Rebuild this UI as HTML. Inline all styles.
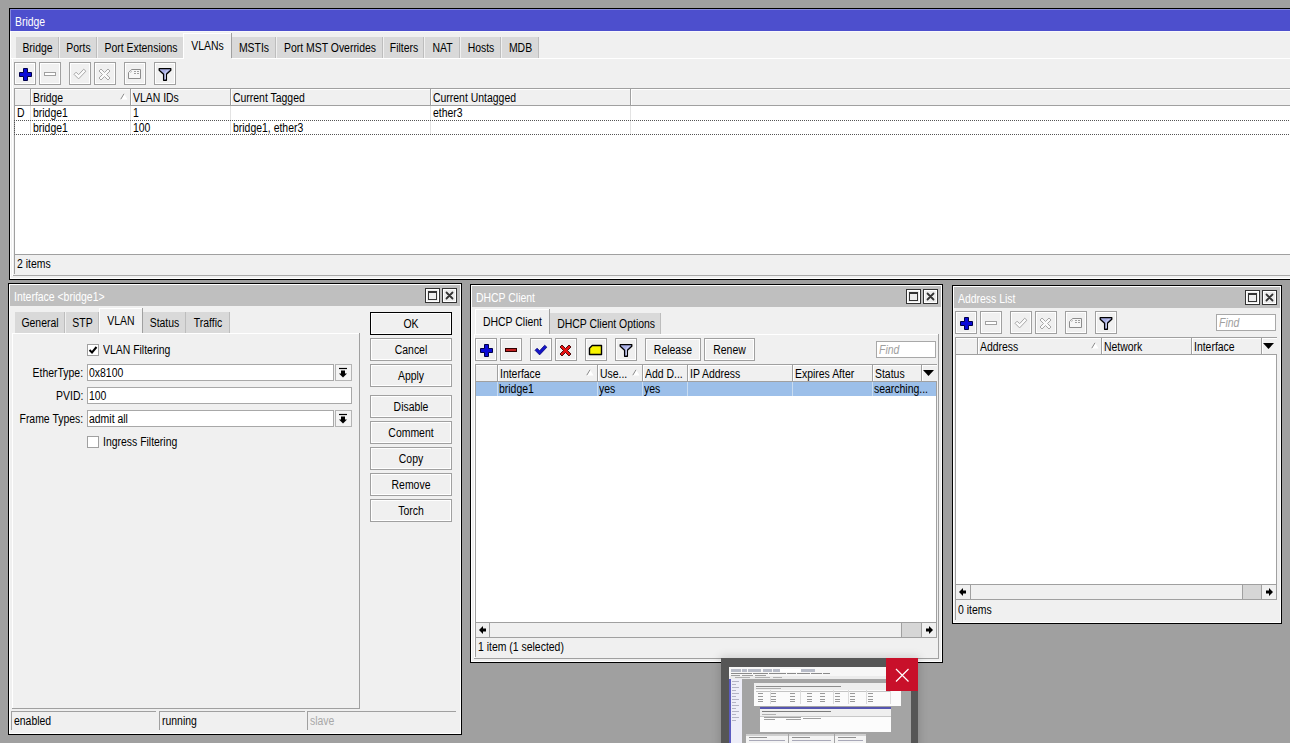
<!DOCTYPE html><html><head><meta charset="utf-8"><style>
html,body{margin:0;padding:0}
body{width:1290px;height:743px;background:#a0a0a0;position:relative;overflow:hidden;font-family:"Liberation Sans",sans-serif;font-size:11px;color:#000}
.t{position:absolute;line-height:12px;white-space:nowrap;font-size:12px;transform:scaleX(0.87);transform-origin:0 0}
.tc{transform-origin:50% 0}.tr{transform-origin:100% 0}
</style></head><body>
<div style="position:absolute;left:9px;top:8px;width:1292px;height:272px;background:#000"></div>
<div style="position:absolute;left:10px;top:9px;width:1290px;height:270px;background:#fff"></div>
<div style="position:absolute;left:11px;top:10px;width:1288px;height:268px;background:#f0f0f0"></div>
<div style="position:absolute;left:11px;top:10px;width:1288px;height:21px;background:#4d4fcd"></div>
<div style="position:absolute;left:10px;top:9px;width:1290px;height:1px;background:#8587dc"></div>
<div style="position:absolute;left:10px;top:9px;width:1px;height:22px;background:#8587dc"></div>
<div style="position:absolute;left:11px;top:31px;width:1288px;height:1px;background:#f8f8fc"></div>
<div class="t" style="left:15px;top:16px;color:#fff">Bridge</div>
<div style="position:absolute;left:11px;top:58px;width:1280px;height:1px;background:#fff"></div>
<div style="position:absolute;left:16px;top:37px;width:42px;height:21px;background:#d9d9d9"></div>
<div style="position:absolute;left:58px;top:37px;width:1px;height:21px;background:#bdbdbd"></div>
<div class="t tc" style="left:16px;width:43px;text-align:center;top:42px;">Bridge</div>
<div style="position:absolute;left:60px;top:37px;width:36px;height:21px;background:#d9d9d9"></div>
<div style="position:absolute;left:96px;top:37px;width:1px;height:21px;background:#bdbdbd"></div>
<div class="t tc" style="left:60px;width:37px;text-align:center;top:42px;">Ports</div>
<div style="position:absolute;left:98px;top:37px;width:85px;height:21px;background:#d9d9d9"></div>
<div style="position:absolute;left:183px;top:37px;width:1px;height:21px;background:#bdbdbd"></div>
<div class="t tc" style="left:98px;width:86px;text-align:center;top:42px;">Port Extensions</div>
<div style="position:absolute;left:183px;top:33px;width:49px;height:26px;background:#f0f0f0"></div>
<div style="position:absolute;left:183px;top:33px;width:48px;height:1px;background:#fff"></div>
<div style="position:absolute;left:183px;top:33px;width:1px;height:26px;background:#fff"></div>
<div style="position:absolute;left:231px;top:33px;width:1px;height:25px;background:#a0a0a0"></div>
<div class="t tc" style="left:183px;width:49px;text-align:center;top:40px;">VLANs</div>
<div style="position:absolute;left:232px;top:37px;width:43px;height:21px;background:#d9d9d9"></div>
<div style="position:absolute;left:275px;top:37px;width:1px;height:21px;background:#bdbdbd"></div>
<div class="t tc" style="left:232px;width:44px;text-align:center;top:42px;">MSTIs</div>
<div style="position:absolute;left:277px;top:37px;width:105px;height:21px;background:#d9d9d9"></div>
<div style="position:absolute;left:382px;top:37px;width:1px;height:21px;background:#bdbdbd"></div>
<div class="t tc" style="left:277px;width:106px;text-align:center;top:42px;">Port MST Overrides</div>
<div style="position:absolute;left:384px;top:37px;width:39px;height:21px;background:#d9d9d9"></div>
<div style="position:absolute;left:423px;top:37px;width:1px;height:21px;background:#bdbdbd"></div>
<div class="t tc" style="left:384px;width:40px;text-align:center;top:42px;">Filters</div>
<div style="position:absolute;left:425px;top:37px;width:34px;height:21px;background:#d9d9d9"></div>
<div style="position:absolute;left:459px;top:37px;width:1px;height:21px;background:#bdbdbd"></div>
<div class="t tc" style="left:425px;width:35px;text-align:center;top:42px;">NAT</div>
<div style="position:absolute;left:461px;top:37px;width:39px;height:21px;background:#d9d9d9"></div>
<div style="position:absolute;left:500px;top:37px;width:1px;height:21px;background:#bdbdbd"></div>
<div class="t tc" style="left:461px;width:40px;text-align:center;top:42px;">Hosts</div>
<div style="position:absolute;left:502px;top:37px;width:36px;height:21px;background:#d9d9d9"></div>
<div style="position:absolute;left:538px;top:37px;width:1px;height:21px;background:#bdbdbd"></div>
<div class="t tc" style="left:502px;width:37px;text-align:center;top:42px;">MDB</div>
<div style="position:absolute;left:14px;top:62px;width:22px;height:23px;background:#a0a0a0"></div>
<div style="position:absolute;left:15px;top:63px;width:20px;height:21px;background:#fff"></div>
<div style="position:absolute;left:16px;top:64px;width:18px;height:19px;background:#f0f0f0"></div>
<svg style="position:absolute;left:14px;top:62px" width="22" height="23"><path d="M9 6h4v4h4v4h-4v4h-4v-4h-4v-4h4z" fill="#0a0ad8" stroke="#000048" stroke-width="1" transform="translate(0.5,0.5)"/></svg>
<div style="position:absolute;left:39px;top:62px;width:22px;height:23px;background:#a0a0a0"></div>
<div style="position:absolute;left:40px;top:63px;width:20px;height:21px;background:#fff"></div>
<div style="position:absolute;left:41px;top:64px;width:18px;height:19px;background:#f0f0f0"></div>
<svg style="position:absolute;left:39px;top:62px" width="22" height="23"><rect x="5.5" y="10.5" width="11" height="3" fill="#fff" stroke="#a0a0a0"/></svg>
<div style="position:absolute;left:69px;top:62px;width:22px;height:23px;background:#a0a0a0"></div>
<div style="position:absolute;left:70px;top:63px;width:20px;height:21px;background:#fff"></div>
<div style="position:absolute;left:71px;top:64px;width:18px;height:19px;background:#f0f0f0"></div>
<svg style="position:absolute;left:69px;top:62px" width="22" height="23"><path d="M5 12.3L7.1 10.2L9.6 12.7L14.7 7.2L16.9 9.2L9.6 16.9Z" fill="#fbfbfb" stroke="#a8a8a8" stroke-width="1" stroke-linejoin="miter"/></svg>
<div style="position:absolute;left:94px;top:62px;width:22px;height:23px;background:#a0a0a0"></div>
<div style="position:absolute;left:95px;top:63px;width:20px;height:21px;background:#fff"></div>
<div style="position:absolute;left:96px;top:64px;width:18px;height:19px;background:#f0f0f0"></div>
<svg style="position:absolute;left:94px;top:62px" width="22" height="23"><path d="M5 9L7 7L10.5 10.5L14 7L16 9L12.5 12.5L16 16L14 18L10.5 14.5L7 18L5 16L8.5 12.5Z" fill="#fbfbfb" stroke="#a8a8a8" stroke-width="1"/></svg>
<div style="position:absolute;left:124px;top:62px;width:22px;height:23px;background:#a0a0a0"></div>
<div style="position:absolute;left:125px;top:63px;width:20px;height:21px;background:#fff"></div>
<div style="position:absolute;left:126px;top:64px;width:18px;height:19px;background:#f0f0f0"></div>
<svg style="position:absolute;left:124px;top:62px" width="22" height="23"><path d="M4.5 10.5L7.5 7.5H16.5V16.5H4.5Z" fill="#f6f6f6" stroke="#8c8c8c" stroke-width="1"/><circle cx="6.6" cy="9.4" r="0.9" fill="#fff" stroke="#999" stroke-width="0.6"/><path d="M10 9.5h2M13 9.5h2M10 11.5h2M13 11.5h2" stroke="#a0a0a0" stroke-width="1"/></svg>
<div style="position:absolute;left:154px;top:62px;width:22px;height:23px;background:#a0a0a0"></div>
<div style="position:absolute;left:155px;top:63px;width:20px;height:21px;background:#fff"></div>
<div style="position:absolute;left:156px;top:64px;width:18px;height:19px;background:#f0f0f0"></div>
<svg style="position:absolute;left:154px;top:62px" width="22" height="23"><path d="M5.2 6.6H16.8V8.2L12.4 12.2V18.3H9.6V12.2L5.2 8.2Z" fill="#a8aee4" stroke="#000" stroke-width="1.3" stroke-linejoin="round"/><path d="M13.5 8.2L11.3 10.5V17" stroke="#d4d8f4" stroke-width="1" fill="none"/></svg>
<div style="position:absolute;left:14px;top:88px;width:1287px;height:167px;background:#a0a0a0"></div>
<div style="position:absolute;left:15px;top:89px;width:1286px;height:165px;background:#fff"></div>
<div style="position:absolute;left:14px;top:88px;width:1287px;height:1px;background:#a0a0a0"></div>
<div style="position:absolute;left:14px;top:105px;width:1287px;height:1px;background:#a0a0a0"></div>
<div style="position:absolute;left:14px;top:89px;width:1287px;height:16px;background:#f0f0f0"></div>
<div style="position:absolute;left:14px;top:89px;width:1287px;height:1px;background:#fff"></div>
<div style="position:absolute;left:14px;top:88px;width:1px;height:18px;background:#a0a0a0"></div>
<div style="position:absolute;left:30px;top:89px;width:1px;height:16px;background:#a0a0a0"></div>
<div style="position:absolute;left:31px;top:89px;width:1px;height:16px;background:#fff"></div>
<div class="t" style="left:33px;top:92px;">Bridge</div>
<div style="position:absolute;left:130px;top:89px;width:1px;height:16px;background:#a0a0a0"></div>
<div style="position:absolute;left:131px;top:89px;width:1px;height:16px;background:#fff"></div>
<div class="t" style="left:133px;top:92px;">VLAN IDs</div>
<div style="position:absolute;left:230px;top:89px;width:1px;height:16px;background:#a0a0a0"></div>
<div style="position:absolute;left:231px;top:89px;width:1px;height:16px;background:#fff"></div>
<div class="t" style="left:233px;top:92px;">Current Tagged</div>
<div style="position:absolute;left:430px;top:89px;width:1px;height:16px;background:#a0a0a0"></div>
<div style="position:absolute;left:431px;top:89px;width:1px;height:16px;background:#fff"></div>
<div class="t" style="left:433px;top:92px;">Current Untagged</div>
<div style="position:absolute;left:630px;top:89px;width:1px;height:16px;background:#a0a0a0"></div>
<div style="position:absolute;left:631px;top:89px;width:1px;height:16px;background:#fff"></div>
<svg style="position:absolute;left:120px;top:93px" width="8" height="7"><path d="M4 0.5L7.5 6.5H0.5z" fill="#fff"/><path d="M4 0.8L0.8 6.2" stroke="#8a8a8a" stroke-width="1"/></svg>
<div style="position:absolute;left:30px;top:106px;width:1px;height:29px;background:#e3e3e3"></div>
<div style="position:absolute;left:130px;top:106px;width:1px;height:29px;background:#e3e3e3"></div>
<div style="position:absolute;left:230px;top:106px;width:1px;height:29px;background:#e3e3e3"></div>
<div style="position:absolute;left:430px;top:106px;width:1px;height:29px;background:#e3e3e3"></div>
<div style="position:absolute;left:630px;top:106px;width:1px;height:29px;background:#e3e3e3"></div>
<div class="t" style="left:17px;top:107px;">D</div>
<div class="t" style="left:33px;top:107px;">bridge1</div>
<div class="t" style="left:133px;top:107px;">1</div>
<div class="t" style="left:433px;top:107px;">ether3</div>
<div class="t" style="left:33px;top:122px;">bridge1</div>
<div class="t" style="left:133px;top:122px;">100</div>
<div class="t" style="left:233px;top:122px;">bridge1, ether3</div>
<div style="position:absolute;left:14px;top:120px;width:1290px;height:13px;border-top:1px dotted #555;border-bottom:1px dotted #555;border-left:1px dotted #555"></div>
<div style="position:absolute;left:14px;top:255px;width:1px;height:19px;background:#a0a0a0"></div>
<div style="position:absolute;left:13px;top:275px;width:1288px;height:1px;background:#a8a8a8"></div>
<div style="position:absolute;left:12px;top:58px;width:1px;height:218px;background:#fff"></div>
<div class="t" style="left:17px;top:258px;">2 items</div>
<div style="position:absolute;left:8px;top:283px;width:454px;height:452px;background:#000"></div>
<div style="position:absolute;left:9px;top:284px;width:452px;height:450px;background:#fff"></div>
<div style="position:absolute;left:10px;top:285px;width:450px;height:448px;background:#f0f0f0"></div>
<div style="position:absolute;left:10px;top:285px;width:450px;height:21px;background:#bfbfbf"></div>
<div class="t" style="left:14px;top:291px;color:#fff">Interface &lt;bridge1&gt;</div>
<div style="position:absolute;left:425px;top:288px;width:15px;height:15px;background:#333"></div>
<div style="position:absolute;left:426px;top:289px;width:13px;height:13px;background:#fff"></div>
<div style="position:absolute;left:427px;top:290px;width:11px;height:11px;background:#ececec"></div>
<div style="position:absolute;left:442px;top:288px;width:15px;height:15px;background:#333"></div>
<div style="position:absolute;left:443px;top:289px;width:13px;height:13px;background:#fff"></div>
<div style="position:absolute;left:444px;top:290px;width:11px;height:11px;background:#ececec"></div>
<div style="position:absolute;left:428px;top:291px;width:7px;height:6px;border:1px solid #333;border-top-width:2px;background:#ececec"></div>
<svg style="position:absolute;left:442px;top:288px" width="15" height="15"><path d="M4.5 4.5L10.5 10.5M10.5 4.5L4.5 10.5" stroke="#333" stroke-width="1.8" stroke-linecap="round"/></svg>
<div style="position:absolute;left:12px;top:333px;width:348px;height:1px;background:#fff"></div>
<div style="position:absolute;left:15px;top:312px;width:49px;height:21px;background:#d9d9d9"></div>
<div style="position:absolute;left:64px;top:312px;width:1px;height:21px;background:#bdbdbd"></div>
<div class="t tc" style="left:15px;width:50px;text-align:center;top:317px;">General</div>
<div style="position:absolute;left:66px;top:312px;width:32px;height:21px;background:#d9d9d9"></div>
<div style="position:absolute;left:98px;top:312px;width:1px;height:21px;background:#bdbdbd"></div>
<div class="t tc" style="left:66px;width:33px;text-align:center;top:317px;">STP</div>
<div style="position:absolute;left:99px;top:308px;width:44px;height:26px;background:#f0f0f0"></div>
<div style="position:absolute;left:99px;top:308px;width:43px;height:1px;background:#fff"></div>
<div style="position:absolute;left:99px;top:308px;width:1px;height:26px;background:#fff"></div>
<div style="position:absolute;left:142px;top:308px;width:1px;height:25px;background:#a0a0a0"></div>
<div class="t tc" style="left:99px;width:44px;text-align:center;top:315px;">VLAN</div>
<div style="position:absolute;left:143px;top:312px;width:42px;height:21px;background:#d9d9d9"></div>
<div style="position:absolute;left:185px;top:312px;width:1px;height:21px;background:#bdbdbd"></div>
<div class="t tc" style="left:143px;width:43px;text-align:center;top:317px;">Status</div>
<div style="position:absolute;left:186px;top:312px;width:43px;height:21px;background:#d9d9d9"></div>
<div style="position:absolute;left:229px;top:312px;width:1px;height:21px;background:#bdbdbd"></div>
<div class="t tc" style="left:186px;width:44px;text-align:center;top:317px;">Traffic</div>
<div style="position:absolute;left:12px;top:333px;width:348px;height:376px;background:#a0a0a0"></div>
<div style="position:absolute;left:12px;top:333px;width:347px;height:375px;background:#fff"></div>
<div style="position:absolute;left:13px;top:334px;width:346px;height:374px;background:#f0f0f0"></div>
<div style="position:absolute;left:87px;top:344px;width:12px;height:12px;background:#a0a0a0"></div>
<div style="position:absolute;left:88px;top:345px;width:10px;height:10px;background:#fff"></div>
<svg style="position:absolute;left:87px;top:344px" width="12" height="12"><path d="M2.5 6l2.5 2.5 4.5-5.5" fill="none" stroke="#000" stroke-width="2"/></svg>
<div class="t" style="left:103px;top:344px;">VLAN Filtering</div>
<div class="t tr" style="right:1207px;top:367px;text-align:right;">EtherType:</div>
<div style="position:absolute;left:87px;top:364px;width:247px;height:17px;background:#a8a8a8"></div>
<div style="position:absolute;left:88px;top:365px;width:245px;height:15px;background:#fff"></div>
<div class="t" style="left:89px;top:367px;">0x8100</div>
<div style="position:absolute;left:335px;top:364px;width:17px;height:17px;background:#b4b4b4"></div>
<div style="position:absolute;left:336px;top:365px;width:15px;height:15px;background:#f4f4f4"></div>
<svg style="position:absolute;left:335px;top:364px" width="17" height="17"><path d="M4 4.5h8" stroke="#000" stroke-width="1.2"/><path d="M6 6.5h4v3h2l-4 4-4-4h2z" fill="#000"/></svg>
<div class="t tr" style="right:1207px;top:390px;text-align:right;">PVID:</div>
<div style="position:absolute;left:87px;top:387px;width:265px;height:17px;background:#a8a8a8"></div>
<div style="position:absolute;left:88px;top:388px;width:263px;height:15px;background:#fff"></div>
<div class="t" style="left:89px;top:390px;">100</div>
<div class="t tr" style="right:1207px;top:413px;text-align:right;">Frame Types:</div>
<div style="position:absolute;left:87px;top:410px;width:247px;height:17px;background:#a8a8a8"></div>
<div style="position:absolute;left:88px;top:411px;width:245px;height:15px;background:#fff"></div>
<div class="t" style="left:89px;top:413px;">admit all</div>
<div style="position:absolute;left:335px;top:410px;width:17px;height:17px;background:#b4b4b4"></div>
<div style="position:absolute;left:336px;top:411px;width:15px;height:15px;background:#f4f4f4"></div>
<svg style="position:absolute;left:335px;top:410px" width="17" height="17"><path d="M4 4.5h8" stroke="#000" stroke-width="1.2"/><path d="M6 6.5h4v3h2l-4 4-4-4h2z" fill="#000"/></svg>
<div style="position:absolute;left:87px;top:436px;width:12px;height:12px;background:#a0a0a0"></div>
<div style="position:absolute;left:88px;top:437px;width:10px;height:10px;background:#fff"></div>
<div class="t" style="left:103px;top:436px;">Ingress Filtering</div>
<div style="position:absolute;left:370px;top:312px;width:82px;height:23px;background:#000"></div>
<div style="position:absolute;left:371px;top:313px;width:80px;height:21px;background:#fff"></div>
<div style="position:absolute;left:372px;top:314px;width:78px;height:19px;background:#f0f0f0"></div>
<div class="t tc" style="left:370px;width:82px;text-align:center;top:318px;">OK</div>
<div style="position:absolute;left:370px;top:338px;width:82px;height:23px;background:#a0a0a0"></div>
<div style="position:absolute;left:371px;top:339px;width:80px;height:21px;background:#fff"></div>
<div style="position:absolute;left:372px;top:340px;width:78px;height:19px;background:#f0f0f0"></div>
<div class="t tc" style="left:370px;width:82px;text-align:center;top:344px;">Cancel</div>
<div style="position:absolute;left:370px;top:364px;width:82px;height:23px;background:#a0a0a0"></div>
<div style="position:absolute;left:371px;top:365px;width:80px;height:21px;background:#fff"></div>
<div style="position:absolute;left:372px;top:366px;width:78px;height:19px;background:#f0f0f0"></div>
<div class="t tc" style="left:370px;width:82px;text-align:center;top:370px;">Apply</div>
<div style="position:absolute;left:370px;top:395px;width:82px;height:23px;background:#a0a0a0"></div>
<div style="position:absolute;left:371px;top:396px;width:80px;height:21px;background:#fff"></div>
<div style="position:absolute;left:372px;top:397px;width:78px;height:19px;background:#f0f0f0"></div>
<div class="t tc" style="left:370px;width:82px;text-align:center;top:401px;">Disable</div>
<div style="position:absolute;left:370px;top:421px;width:82px;height:23px;background:#a0a0a0"></div>
<div style="position:absolute;left:371px;top:422px;width:80px;height:21px;background:#fff"></div>
<div style="position:absolute;left:372px;top:423px;width:78px;height:19px;background:#f0f0f0"></div>
<div class="t tc" style="left:370px;width:82px;text-align:center;top:427px;">Comment</div>
<div style="position:absolute;left:370px;top:447px;width:82px;height:23px;background:#a0a0a0"></div>
<div style="position:absolute;left:371px;top:448px;width:80px;height:21px;background:#fff"></div>
<div style="position:absolute;left:372px;top:449px;width:78px;height:19px;background:#f0f0f0"></div>
<div class="t tc" style="left:370px;width:82px;text-align:center;top:453px;">Copy</div>
<div style="position:absolute;left:370px;top:473px;width:82px;height:23px;background:#a0a0a0"></div>
<div style="position:absolute;left:371px;top:474px;width:80px;height:21px;background:#fff"></div>
<div style="position:absolute;left:372px;top:475px;width:78px;height:19px;background:#f0f0f0"></div>
<div class="t tc" style="left:370px;width:82px;text-align:center;top:479px;">Remove</div>
<div style="position:absolute;left:370px;top:499px;width:82px;height:23px;background:#a0a0a0"></div>
<div style="position:absolute;left:371px;top:500px;width:80px;height:21px;background:#fff"></div>
<div style="position:absolute;left:372px;top:501px;width:78px;height:19px;background:#f0f0f0"></div>
<div class="t tc" style="left:370px;width:82px;text-align:center;top:505px;">Torch</div>
<div style="position:absolute;left:11px;top:711px;width:145px;height:1px;background:#a0a0a0"></div>
<div style="position:absolute;left:11px;top:711px;width:1px;height:19px;background:#a0a0a0"></div>
<div class="t" style="left:14px;top:715px;color:#000">enabled</div>
<div style="position:absolute;left:159px;top:711px;width:146px;height:1px;background:#a0a0a0"></div>
<div style="position:absolute;left:159px;top:711px;width:1px;height:19px;background:#a0a0a0"></div>
<div class="t" style="left:162px;top:715px;color:#000">running</div>
<div style="position:absolute;left:307px;top:711px;width:149px;height:1px;background:#a0a0a0"></div>
<div style="position:absolute;left:307px;top:711px;width:1px;height:19px;background:#a0a0a0"></div>
<div class="t" style="left:310px;top:715px;color:#a8a8a8">slave</div>
<div style="position:absolute;left:470px;top:284px;width:473px;height:379px;background:#000"></div>
<div style="position:absolute;left:471px;top:285px;width:471px;height:377px;background:#fff"></div>
<div style="position:absolute;left:472px;top:286px;width:469px;height:375px;background:#f0f0f0"></div>
<div style="position:absolute;left:472px;top:286px;width:469px;height:21px;background:#bfbfbf"></div>
<div class="t" style="left:476px;top:292px;color:#fff">DHCP Client</div>
<div style="position:absolute;left:906px;top:289px;width:15px;height:15px;background:#333"></div>
<div style="position:absolute;left:907px;top:290px;width:13px;height:13px;background:#fff"></div>
<div style="position:absolute;left:908px;top:291px;width:11px;height:11px;background:#ececec"></div>
<div style="position:absolute;left:923px;top:289px;width:15px;height:15px;background:#333"></div>
<div style="position:absolute;left:924px;top:290px;width:13px;height:13px;background:#fff"></div>
<div style="position:absolute;left:925px;top:291px;width:11px;height:11px;background:#ececec"></div>
<div style="position:absolute;left:909px;top:292px;width:7px;height:6px;border:1px solid #333;border-top-width:2px;background:#ececec"></div>
<svg style="position:absolute;left:923px;top:289px" width="15" height="15"><path d="M4.5 4.5L10.5 10.5M10.5 4.5L4.5 10.5" stroke="#333" stroke-width="1.8" stroke-linecap="round"/></svg>
<div style="position:absolute;left:474px;top:334px;width:465px;height:1px;background:#fff"></div>
<div style="position:absolute;left:475px;top:309px;width:75px;height:26px;background:#f0f0f0"></div>
<div style="position:absolute;left:475px;top:309px;width:74px;height:1px;background:#fff"></div>
<div style="position:absolute;left:475px;top:309px;width:1px;height:26px;background:#fff"></div>
<div style="position:absolute;left:549px;top:309px;width:1px;height:25px;background:#a0a0a0"></div>
<div class="t tc" style="left:475px;width:75px;text-align:center;top:316px;">DHCP Client</div>
<div style="position:absolute;left:550px;top:313px;width:110px;height:21px;background:#d9d9d9"></div>
<div style="position:absolute;left:660px;top:313px;width:1px;height:21px;background:#bdbdbd"></div>
<div class="t tc" style="left:550px;width:111px;text-align:center;top:318px;">DHCP Client Options</div>
<div style="position:absolute;left:474px;top:334px;width:465px;height:325px;background:#a0a0a0"></div>
<div style="position:absolute;left:474px;top:334px;width:464px;height:324px;background:#fff"></div>
<div style="position:absolute;left:475px;top:335px;width:463px;height:323px;background:#f0f0f0"></div>
<div style="position:absolute;left:475px;top:338px;width:22px;height:23px;background:#a0a0a0"></div>
<div style="position:absolute;left:476px;top:339px;width:20px;height:21px;background:#fff"></div>
<div style="position:absolute;left:477px;top:340px;width:18px;height:19px;background:#f0f0f0"></div>
<svg style="position:absolute;left:475px;top:338px" width="22" height="23"><path d="M9 6h4v4h4v4h-4v4h-4v-4h-4v-4h4z" fill="#0a0ad8" stroke="#000048" stroke-width="1" transform="translate(0.5,0.5)"/></svg>
<div style="position:absolute;left:500px;top:338px;width:22px;height:23px;background:#a0a0a0"></div>
<div style="position:absolute;left:501px;top:339px;width:20px;height:21px;background:#fff"></div>
<div style="position:absolute;left:502px;top:340px;width:18px;height:19px;background:#f0f0f0"></div>
<svg style="position:absolute;left:500px;top:338px" width="22" height="23"><rect x="5.5" y="10.5" width="11" height="3" fill="#c02020" stroke="#300000"/></svg>
<div style="position:absolute;left:530px;top:338px;width:22px;height:23px;background:#a0a0a0"></div>
<div style="position:absolute;left:531px;top:339px;width:20px;height:21px;background:#fff"></div>
<div style="position:absolute;left:532px;top:340px;width:18px;height:19px;background:#f0f0f0"></div>
<svg style="position:absolute;left:530px;top:338px" width="22" height="23"><path d="M5 12.3L7.1 10.2L9.6 12.7L14.7 7.2L16.9 9.2L9.6 16.9Z" fill="#1414c8" stroke="#000070" stroke-width="0.7"/></svg>
<div style="position:absolute;left:555px;top:338px;width:22px;height:23px;background:#a0a0a0"></div>
<div style="position:absolute;left:556px;top:339px;width:20px;height:21px;background:#fff"></div>
<div style="position:absolute;left:557px;top:340px;width:18px;height:19px;background:#f0f0f0"></div>
<svg style="position:absolute;left:555px;top:338px" width="22" height="23"><path d="M5 9L7 7L10.5 10.5L14 7L16 9L12.5 12.5L16 16L14 18L10.5 14.5L7 18L5 16L8.5 12.5Z" fill="#e81010" stroke="#400000" stroke-width="0.9"/></svg>
<div style="position:absolute;left:585px;top:338px;width:22px;height:23px;background:#a0a0a0"></div>
<div style="position:absolute;left:586px;top:339px;width:20px;height:21px;background:#fff"></div>
<div style="position:absolute;left:587px;top:340px;width:18px;height:19px;background:#f0f0f0"></div>
<svg style="position:absolute;left:585px;top:338px" width="22" height="23"><path d="M4.5 10.2L7.2 7.5H16.5V16.5H4.5Z" fill="#f8f400" stroke="#000" stroke-width="1.4" stroke-linejoin="round"/></svg>
<div style="position:absolute;left:615px;top:338px;width:22px;height:23px;background:#a0a0a0"></div>
<div style="position:absolute;left:616px;top:339px;width:20px;height:21px;background:#fff"></div>
<div style="position:absolute;left:617px;top:340px;width:18px;height:19px;background:#f0f0f0"></div>
<svg style="position:absolute;left:615px;top:338px" width="22" height="23"><path d="M5.2 6.6H16.8V8.2L12.4 12.2V18.3H9.6V12.2L5.2 8.2Z" fill="#a8aee4" stroke="#000" stroke-width="1.3" stroke-linejoin="round"/><path d="M13.5 8.2L11.3 10.5V17" stroke="#d4d8f4" stroke-width="1" fill="none"/></svg>
<div style="position:absolute;left:645px;top:338px;width:56px;height:23px;background:#a0a0a0"></div>
<div style="position:absolute;left:646px;top:339px;width:54px;height:21px;background:#fff"></div>
<div style="position:absolute;left:647px;top:340px;width:52px;height:19px;background:#f0f0f0"></div>
<div class="t tc" style="left:645px;width:56px;text-align:center;top:344px;">Release</div>
<div style="position:absolute;left:704px;top:338px;width:51px;height:23px;background:#a0a0a0"></div>
<div style="position:absolute;left:705px;top:339px;width:49px;height:21px;background:#fff"></div>
<div style="position:absolute;left:706px;top:340px;width:47px;height:19px;background:#f0f0f0"></div>
<div class="t tc" style="left:704px;width:51px;text-align:center;top:344px;">Renew</div>
<div style="position:absolute;left:876px;top:341px;width:60px;height:17px;background:#a8a8a8"></div>
<div style="position:absolute;left:877px;top:342px;width:58px;height:15px;background:#fff"></div>
<div class="t" style="left:879px;top:344px;color:#a0a0a0;font-style:italic">Find</div>
<div style="position:absolute;left:475px;top:364px;width:462px;height:259px;background:#a0a0a0"></div>
<div style="position:absolute;left:476px;top:365px;width:460px;height:257px;background:#fff"></div>
<div style="position:absolute;left:475px;top:364px;width:462px;height:1px;background:#a0a0a0"></div>
<div style="position:absolute;left:475px;top:381px;width:462px;height:1px;background:#a0a0a0"></div>
<div style="position:absolute;left:475px;top:365px;width:462px;height:16px;background:#f0f0f0"></div>
<div style="position:absolute;left:475px;top:365px;width:462px;height:1px;background:#fff"></div>
<div style="position:absolute;left:475px;top:364px;width:1px;height:18px;background:#a0a0a0"></div>
<div style="position:absolute;left:497px;top:365px;width:1px;height:16px;background:#a0a0a0"></div>
<div style="position:absolute;left:498px;top:365px;width:1px;height:16px;background:#fff"></div>
<div class="t" style="left:500px;top:368px;">Interface</div>
<div style="position:absolute;left:597px;top:365px;width:1px;height:16px;background:#a0a0a0"></div>
<div style="position:absolute;left:598px;top:365px;width:1px;height:16px;background:#fff"></div>
<div class="t" style="left:600px;top:368px;">Use...</div>
<div style="position:absolute;left:642px;top:365px;width:1px;height:16px;background:#a0a0a0"></div>
<div style="position:absolute;left:643px;top:365px;width:1px;height:16px;background:#fff"></div>
<div class="t" style="left:645px;top:368px;">Add D...</div>
<div style="position:absolute;left:687px;top:365px;width:1px;height:16px;background:#a0a0a0"></div>
<div style="position:absolute;left:688px;top:365px;width:1px;height:16px;background:#fff"></div>
<div class="t" style="left:690px;top:368px;">IP Address</div>
<div style="position:absolute;left:792px;top:365px;width:1px;height:16px;background:#a0a0a0"></div>
<div style="position:absolute;left:793px;top:365px;width:1px;height:16px;background:#fff"></div>
<div class="t" style="left:795px;top:368px;">Expires After</div>
<div style="position:absolute;left:872px;top:365px;width:1px;height:16px;background:#a0a0a0"></div>
<div style="position:absolute;left:873px;top:365px;width:1px;height:16px;background:#fff"></div>
<div class="t" style="left:875px;top:368px;">Status</div>
<div style="position:absolute;left:921px;top:365px;width:1px;height:16px;background:#a0a0a0"></div>
<div style="position:absolute;left:922px;top:365px;width:1px;height:16px;background:#fff"></div>
<svg style="position:absolute;left:586px;top:369px" width="8" height="7"><path d="M4 0.5L7.5 6.5H0.5z" fill="#fff"/><path d="M4 0.8L0.8 6.2" stroke="#8a8a8a" stroke-width="1"/></svg>
<svg style="position:absolute;left:632px;top:369px" width="8" height="7"><path d="M4 0.5L7.5 6.5H0.5z" fill="#fff"/><path d="M4 0.8L0.8 6.2" stroke="#8a8a8a" stroke-width="1"/></svg>
<svg style="position:absolute;left:923px;top:370px" width="11" height="7"><path d="M0 0H11L5.5 6z" fill="#000"/></svg>
<div style="position:absolute;left:476px;top:382px;width:460px;height:14px;background:#9cbfe9"></div>
<div style="position:absolute;left:497px;top:382px;width:1px;height:14px;background:#c9dcf0"></div>
<div style="position:absolute;left:597px;top:382px;width:1px;height:14px;background:#c9dcf0"></div>
<div style="position:absolute;left:642px;top:382px;width:1px;height:14px;background:#c9dcf0"></div>
<div style="position:absolute;left:687px;top:382px;width:1px;height:14px;background:#c9dcf0"></div>
<div style="position:absolute;left:792px;top:382px;width:1px;height:14px;background:#c9dcf0"></div>
<div style="position:absolute;left:872px;top:382px;width:1px;height:14px;background:#c9dcf0"></div>
<div class="t" style="left:499px;top:383px;">bridge1</div>
<div class="t" style="left:599px;top:383px;">yes</div>
<div class="t" style="left:644px;top:383px;">yes</div>
<div class="t" style="left:874px;top:383px;">searching...</div>
<div style="position:absolute;left:475px;top:622px;width:462px;height:16px;background:#a0a0a0"></div>
<div style="position:absolute;left:476px;top:623px;width:460px;height:14px;background:#f0f0f0"></div>
<div style="position:absolute;left:489px;top:623px;width:1px;height:14px;background:#a0a0a0"></div>
<div style="position:absolute;left:902px;top:623px;width:19px;height:14px;background:#d6d6d6"></div>
<div style="position:absolute;left:901px;top:623px;width:1px;height:14px;background:#a0a0a0"></div>
<div style="position:absolute;left:921px;top:623px;width:1px;height:14px;background:#a0a0a0"></div>
<svg style="position:absolute;left:478px;top:625px" width="10" height="10"><path d="M1 5L5 1V3.5H8V6.5H5V9z" fill="#000"/></svg>
<svg style="position:absolute;left:924px;top:625px" width="10" height="10"><path d="M9 5L5 1V3.5H2V6.5H5V9z" fill="#000"/></svg>
<div style="position:absolute;left:475px;top:638px;width:1px;height:19px;background:#a0a0a0"></div>
<div class="t" style="left:478px;top:641px;">1 item (1 selected)</div>
<div style="position:absolute;left:952px;top:285px;width:330px;height:339px;background:#000"></div>
<div style="position:absolute;left:953px;top:286px;width:328px;height:337px;background:#fff"></div>
<div style="position:absolute;left:954px;top:287px;width:326px;height:335px;background:#f0f0f0"></div>
<div style="position:absolute;left:954px;top:287px;width:326px;height:21px;background:#bfbfbf"></div>
<div class="t" style="left:958px;top:293px;color:#fff">Address List</div>
<div style="position:absolute;left:1245px;top:290px;width:15px;height:15px;background:#333"></div>
<div style="position:absolute;left:1246px;top:291px;width:13px;height:13px;background:#fff"></div>
<div style="position:absolute;left:1247px;top:292px;width:11px;height:11px;background:#ececec"></div>
<div style="position:absolute;left:1262px;top:290px;width:15px;height:15px;background:#333"></div>
<div style="position:absolute;left:1263px;top:291px;width:13px;height:13px;background:#fff"></div>
<div style="position:absolute;left:1264px;top:292px;width:11px;height:11px;background:#ececec"></div>
<div style="position:absolute;left:1248px;top:293px;width:7px;height:6px;border:1px solid #333;border-top-width:2px;background:#ececec"></div>
<svg style="position:absolute;left:1262px;top:290px" width="15" height="15"><path d="M4.5 4.5L10.5 10.5M10.5 4.5L4.5 10.5" stroke="#333" stroke-width="1.8" stroke-linecap="round"/></svg>
<div style="position:absolute;left:955px;top:311px;width:22px;height:23px;background:#a0a0a0"></div>
<div style="position:absolute;left:956px;top:312px;width:20px;height:21px;background:#fff"></div>
<div style="position:absolute;left:957px;top:313px;width:18px;height:19px;background:#f0f0f0"></div>
<svg style="position:absolute;left:955px;top:311px" width="22" height="23"><path d="M9 6h4v4h4v4h-4v4h-4v-4h-4v-4h4z" fill="#0a0ad8" stroke="#000048" stroke-width="1" transform="translate(0.5,0.5)"/></svg>
<div style="position:absolute;left:980px;top:311px;width:22px;height:23px;background:#a0a0a0"></div>
<div style="position:absolute;left:981px;top:312px;width:20px;height:21px;background:#fff"></div>
<div style="position:absolute;left:982px;top:313px;width:18px;height:19px;background:#f0f0f0"></div>
<svg style="position:absolute;left:980px;top:311px" width="22" height="23"><rect x="5.5" y="10.5" width="11" height="3" fill="#fff" stroke="#a0a0a0"/></svg>
<div style="position:absolute;left:1010px;top:311px;width:22px;height:23px;background:#a0a0a0"></div>
<div style="position:absolute;left:1011px;top:312px;width:20px;height:21px;background:#fff"></div>
<div style="position:absolute;left:1012px;top:313px;width:18px;height:19px;background:#f0f0f0"></div>
<svg style="position:absolute;left:1010px;top:311px" width="22" height="23"><path d="M5 12.3L7.1 10.2L9.6 12.7L14.7 7.2L16.9 9.2L9.6 16.9Z" fill="#fbfbfb" stroke="#a8a8a8" stroke-width="1" stroke-linejoin="miter"/></svg>
<div style="position:absolute;left:1035px;top:311px;width:22px;height:23px;background:#a0a0a0"></div>
<div style="position:absolute;left:1036px;top:312px;width:20px;height:21px;background:#fff"></div>
<div style="position:absolute;left:1037px;top:313px;width:18px;height:19px;background:#f0f0f0"></div>
<svg style="position:absolute;left:1035px;top:311px" width="22" height="23"><path d="M5 9L7 7L10.5 10.5L14 7L16 9L12.5 12.5L16 16L14 18L10.5 14.5L7 18L5 16L8.5 12.5Z" fill="#fbfbfb" stroke="#a8a8a8" stroke-width="1"/></svg>
<div style="position:absolute;left:1065px;top:311px;width:22px;height:23px;background:#a0a0a0"></div>
<div style="position:absolute;left:1066px;top:312px;width:20px;height:21px;background:#fff"></div>
<div style="position:absolute;left:1067px;top:313px;width:18px;height:19px;background:#f0f0f0"></div>
<svg style="position:absolute;left:1065px;top:311px" width="22" height="23"><path d="M4.5 10.5L7.5 7.5H16.5V16.5H4.5Z" fill="#f6f6f6" stroke="#8c8c8c" stroke-width="1"/><circle cx="6.6" cy="9.4" r="0.9" fill="#fff" stroke="#999" stroke-width="0.6"/><path d="M10 9.5h2M13 9.5h2M10 11.5h2M13 11.5h2" stroke="#a0a0a0" stroke-width="1"/></svg>
<div style="position:absolute;left:1095px;top:311px;width:22px;height:23px;background:#a0a0a0"></div>
<div style="position:absolute;left:1096px;top:312px;width:20px;height:21px;background:#fff"></div>
<div style="position:absolute;left:1097px;top:313px;width:18px;height:19px;background:#f0f0f0"></div>
<svg style="position:absolute;left:1095px;top:311px" width="22" height="23"><path d="M5.2 6.6H16.8V8.2L12.4 12.2V18.3H9.6V12.2L5.2 8.2Z" fill="#a8aee4" stroke="#000" stroke-width="1.3" stroke-linejoin="round"/><path d="M13.5 8.2L11.3 10.5V17" stroke="#d4d8f4" stroke-width="1" fill="none"/></svg>
<div style="position:absolute;left:1216px;top:314px;width:60px;height:17px;background:#a8a8a8"></div>
<div style="position:absolute;left:1217px;top:315px;width:58px;height:15px;background:#fff"></div>
<div class="t" style="left:1219px;top:317px;color:#a0a0a0;font-style:italic">Find</div>
<div style="position:absolute;left:955px;top:337px;width:322px;height:263px;background:#a0a0a0"></div>
<div style="position:absolute;left:956px;top:338px;width:320px;height:261px;background:#fff"></div>
<div style="position:absolute;left:955px;top:337px;width:322px;height:1px;background:#a0a0a0"></div>
<div style="position:absolute;left:955px;top:354px;width:322px;height:1px;background:#a0a0a0"></div>
<div style="position:absolute;left:955px;top:338px;width:322px;height:16px;background:#f0f0f0"></div>
<div style="position:absolute;left:955px;top:338px;width:322px;height:1px;background:#fff"></div>
<div style="position:absolute;left:955px;top:337px;width:1px;height:18px;background:#a0a0a0"></div>
<div style="position:absolute;left:977px;top:338px;width:1px;height:16px;background:#a0a0a0"></div>
<div style="position:absolute;left:978px;top:338px;width:1px;height:16px;background:#fff"></div>
<div class="t" style="left:980px;top:341px;">Address</div>
<div style="position:absolute;left:1101px;top:338px;width:1px;height:16px;background:#a0a0a0"></div>
<div style="position:absolute;left:1102px;top:338px;width:1px;height:16px;background:#fff"></div>
<div class="t" style="left:1104px;top:341px;">Network</div>
<div style="position:absolute;left:1191px;top:338px;width:1px;height:16px;background:#a0a0a0"></div>
<div style="position:absolute;left:1192px;top:338px;width:1px;height:16px;background:#fff"></div>
<div class="t" style="left:1194px;top:341px;">Interface</div>
<div style="position:absolute;left:1261px;top:338px;width:1px;height:16px;background:#a0a0a0"></div>
<div style="position:absolute;left:1262px;top:338px;width:1px;height:16px;background:#fff"></div>
<svg style="position:absolute;left:1091px;top:342px" width="8" height="7"><path d="M4 0.5L7.5 6.5H0.5z" fill="#fff"/><path d="M4 0.8L0.8 6.2" stroke="#8a8a8a" stroke-width="1"/></svg>
<svg style="position:absolute;left:1263px;top:343px" width="11" height="7"><path d="M0 0H11L5.5 6z" fill="#000"/></svg>
<div style="position:absolute;left:956px;top:585px;width:320px;height:14px;background:#f0f0f0"></div>
<div style="position:absolute;left:955px;top:584px;width:322px;height:1px;background:#a0a0a0"></div>
<div style="position:absolute;left:970px;top:585px;width:1px;height:14px;background:#a0a0a0"></div>
<div style="position:absolute;left:1242px;top:585px;width:20px;height:14px;background:#d6d6d6"></div>
<div style="position:absolute;left:1242px;top:585px;width:1px;height:14px;background:#a0a0a0"></div>
<div style="position:absolute;left:1261px;top:585px;width:1px;height:14px;background:#a0a0a0"></div>
<svg style="position:absolute;left:958px;top:587px" width="10" height="10"><path d="M1 5L5 1V3.5H8V6.5H5V9z" fill="#000"/></svg>
<svg style="position:absolute;left:1264px;top:587px" width="10" height="10"><path d="M9 5L5 1V3.5H2V6.5H5V9z" fill="#000"/></svg>
<div style="position:absolute;left:955px;top:600px;width:1px;height:20px;background:#a0a0a0"></div>
<div class="t" style="left:958px;top:604px;">0 items</div>
<div style="position:absolute;left:721px;top:658px;width:197px;height:103px;background:#565656;box-shadow:0 0 9px 1px rgba(0,0,0,0.16)"></div>
<div style="position:absolute;left:729px;top:667px;width:182px;height:76px;background:#a4a4a4"></div>
<div style="position:absolute;left:729px;top:667px;width:182px;height:12px;background:#f7f7f7"></div>
<div style="position:absolute;left:729px;top:676px;width:182px;height:3px;background:#ececec"></div>
<div style="position:absolute;left:731px;top:669px;width:10px;height:3px;background:#b8bcc8"></div>
<div style="position:absolute;left:742px;top:669px;width:5px;height:3px;background:#b8bcc8"></div>
<div style="position:absolute;left:748px;top:669px;width:13px;height:3px;background:#b8bcc8"></div>
<div style="position:absolute;left:763px;top:669px;width:9px;height:3px;background:#b8bcc8"></div>
<div style="position:absolute;left:773px;top:669px;width:13px;height:3px;background:#b8bcc8"></div>
<div style="position:absolute;left:788px;top:669px;width:11px;height:3px;background:#b8bcc8"></div>
<div style="position:absolute;left:800px;top:669px;width:15px;height:3px;background:#b8bcc8"></div>
<div style="position:absolute;left:780px;top:669px;width:21px;height:3px;background:#fff;border:0"></div>
<div style="position:absolute;left:731px;top:673px;width:21px;height:1px;background:#8a8a8a"></div>
<div style="position:absolute;left:753px;top:673px;width:15px;height:1px;background:#8a8a8a"></div>
<div style="position:absolute;left:769px;top:673px;width:17px;height:1px;background:#8a8a8a"></div>
<div style="position:absolute;left:787px;top:673px;width:9px;height:1px;background:#8a8a8a"></div>
<div style="position:absolute;left:797px;top:673px;width:13px;height:1px;background:#8a8a8a"></div>
<div style="position:absolute;left:811px;top:673px;width:11px;height:1px;background:#8a8a8a"></div>
<div style="position:absolute;left:823px;top:673px;width:7px;height:1px;background:#8a8a8a"></div>
<div style="position:absolute;left:731px;top:675px;width:9px;height:1px;background:#a0a0a0"></div>
<div style="position:absolute;left:742px;top:675px;width:11px;height:1px;background:#a0a0a0"></div>
<div style="position:absolute;left:755px;top:675px;width:11px;height:1px;background:#a0a0a0"></div>
<div style="position:absolute;left:735px;top:677px;width:15px;height:1px;background:#b0b0b0"></div>
<div style="position:absolute;left:755px;top:677px;width:15px;height:1px;background:#b0b0b0"></div>
<div style="position:absolute;left:773px;top:677px;width:9px;height:1px;background:#b0b0b0"></div>
<div style="position:absolute;left:729px;top:679px;width:13px;height:64px;background:#eeeef8"></div>
<div style="position:absolute;left:729px;top:679px;width:2px;height:64px;background:#5b5bc0"></div>
<div style="position:absolute;left:732px;top:681px;width:7px;height:1px;background:#b4b4c4"></div>
<div style="position:absolute;left:732px;top:684px;width:4px;height:1px;background:#b4b4c4"></div>
<div style="position:absolute;left:732px;top:687px;width:7px;height:1px;background:#b4b4c4"></div>
<div style="position:absolute;left:732px;top:690px;width:4px;height:1px;background:#b4b4c4"></div>
<div style="position:absolute;left:732px;top:693px;width:7px;height:1px;background:#b4b4c4"></div>
<div style="position:absolute;left:732px;top:696px;width:4px;height:1px;background:#b4b4c4"></div>
<div style="position:absolute;left:732px;top:699px;width:7px;height:1px;background:#b4b4c4"></div>
<div style="position:absolute;left:732px;top:702px;width:4px;height:1px;background:#b4b4c4"></div>
<div style="position:absolute;left:732px;top:705px;width:7px;height:1px;background:#b4b4c4"></div>
<div style="position:absolute;left:732px;top:708px;width:4px;height:1px;background:#b4b4c4"></div>
<div style="position:absolute;left:732px;top:711px;width:7px;height:1px;background:#b4b4c4"></div>
<div style="position:absolute;left:732px;top:714px;width:4px;height:1px;background:#b4b4c4"></div>
<div style="position:absolute;left:732px;top:717px;width:7px;height:1px;background:#b4b4c4"></div>
<div style="position:absolute;left:732px;top:720px;width:4px;height:1px;background:#b4b4c4"></div>
<div style="position:absolute;left:754px;top:683px;width:147px;height:23px;background:#fbfbfb"></div>
<div style="position:absolute;left:754px;top:683px;width:147px;height:7px;background:#eeeeee"></div>
<div style="position:absolute;left:756px;top:686px;width:85px;height:1px;background:#8c8c8c"></div>
<div style="position:absolute;left:756px;top:688px;width:25px;height:1px;background:#b0b0b0"></div>
<div style="position:absolute;left:756px;top:691px;width:135px;height:1px;background:#c4c4c4"></div>
<div style="position:absolute;left:758px;top:693px;width:5px;height:1px;background:#9a9a9a"></div>
<div style="position:absolute;left:771px;top:693px;width:5px;height:1px;background:#9a9a9a"></div>
<div style="position:absolute;left:790px;top:693px;width:5px;height:1px;background:#9a9a9a"></div>
<div style="position:absolute;left:807px;top:693px;width:5px;height:1px;background:#9a9a9a"></div>
<div style="position:absolute;left:820px;top:693px;width:5px;height:1px;background:#9a9a9a"></div>
<div style="position:absolute;left:835px;top:693px;width:5px;height:1px;background:#9a9a9a"></div>
<div style="position:absolute;left:850px;top:693px;width:5px;height:1px;background:#9a9a9a"></div>
<div style="position:absolute;left:868px;top:693px;width:5px;height:1px;background:#9a9a9a"></div>
<div style="position:absolute;left:758px;top:696px;width:5px;height:1px;background:#9a9a9a"></div>
<div style="position:absolute;left:771px;top:696px;width:5px;height:1px;background:#9a9a9a"></div>
<div style="position:absolute;left:790px;top:696px;width:5px;height:1px;background:#9a9a9a"></div>
<div style="position:absolute;left:807px;top:696px;width:5px;height:1px;background:#9a9a9a"></div>
<div style="position:absolute;left:820px;top:696px;width:5px;height:1px;background:#9a9a9a"></div>
<div style="position:absolute;left:835px;top:696px;width:5px;height:1px;background:#9a9a9a"></div>
<div style="position:absolute;left:850px;top:696px;width:5px;height:1px;background:#9a9a9a"></div>
<div style="position:absolute;left:868px;top:696px;width:5px;height:1px;background:#9a9a9a"></div>
<div style="position:absolute;left:758px;top:699px;width:5px;height:1px;background:#9a9a9a"></div>
<div style="position:absolute;left:771px;top:699px;width:5px;height:1px;background:#9a9a9a"></div>
<div style="position:absolute;left:790px;top:699px;width:5px;height:1px;background:#9a9a9a"></div>
<div style="position:absolute;left:807px;top:699px;width:5px;height:1px;background:#9a9a9a"></div>
<div style="position:absolute;left:820px;top:699px;width:5px;height:1px;background:#9a9a9a"></div>
<div style="position:absolute;left:835px;top:699px;width:5px;height:1px;background:#9a9a9a"></div>
<div style="position:absolute;left:850px;top:699px;width:5px;height:1px;background:#9a9a9a"></div>
<div style="position:absolute;left:868px;top:699px;width:5px;height:1px;background:#9a9a9a"></div>
<div style="position:absolute;left:758px;top:701px;width:5px;height:1px;background:#9a9a9a"></div>
<div style="position:absolute;left:771px;top:701px;width:5px;height:1px;background:#9a9a9a"></div>
<div style="position:absolute;left:790px;top:701px;width:5px;height:1px;background:#9a9a9a"></div>
<div style="position:absolute;left:807px;top:701px;width:5px;height:1px;background:#9a9a9a"></div>
<div style="position:absolute;left:820px;top:701px;width:5px;height:1px;background:#9a9a9a"></div>
<div style="position:absolute;left:835px;top:701px;width:5px;height:1px;background:#9a9a9a"></div>
<div style="position:absolute;left:850px;top:701px;width:5px;height:1px;background:#9a9a9a"></div>
<div style="position:absolute;left:868px;top:701px;width:5px;height:1px;background:#9a9a9a"></div>
<div style="position:absolute;left:770px;top:690px;width:1px;height:14px;background:#dcdcdc"></div>
<div style="position:absolute;left:800px;top:690px;width:1px;height:14px;background:#dcdcdc"></div>
<div style="position:absolute;left:833px;top:690px;width:1px;height:14px;background:#dcdcdc"></div>
<div style="position:absolute;left:848px;top:690px;width:1px;height:14px;background:#dcdcdc"></div>
<div style="position:absolute;left:866px;top:690px;width:1px;height:14px;background:#dcdcdc"></div>
<div style="position:absolute;left:890px;top:690px;width:1px;height:14px;background:#dcdcdc"></div>
<div style="position:absolute;left:760px;top:707px;width:131px;height:25px;background:#fcfcfc"></div>
<div style="position:absolute;left:760px;top:707px;width:131px;height:2px;background:#5555b0"></div>
<div style="position:absolute;left:760px;top:709px;width:131px;height:8px;background:#efefef"></div>
<div style="position:absolute;left:762px;top:711px;width:69px;height:1px;background:#7c7c7c"></div>
<div style="position:absolute;left:762px;top:714px;width:14px;height:1px;background:#b0b0b0"></div>
<div style="position:absolute;left:760px;top:716px;width:131px;height:1px;background:#c8c8c8"></div>
<div style="position:absolute;left:764px;top:717px;width:37px;height:1px;background:#a0a0a0"></div>
<div style="position:absolute;left:803px;top:718px;width:18px;height:1px;background:#a0a0a0"></div>
<div style="position:absolute;left:764px;top:719px;width:11px;height:1px;background:#a0a0a0"></div>
<div style="position:absolute;left:786px;top:719px;width:15px;height:1px;background:#a0a0a0"></div>
<div style="position:absolute;left:746px;top:734px;width:42px;height:9px;background:#f4f4f4"></div>
<div style="position:absolute;left:746px;top:734px;width:42px;height:2px;background:#cfcfcf"></div>
<div style="position:absolute;left:749px;top:737px;width:18px;height:1px;background:#909090"></div>
<div style="position:absolute;left:749px;top:740px;width:36px;height:1px;background:#a8a8b8"></div>
<div style="position:absolute;left:789px;top:734px;width:45px;height:9px;background:#f4f4f4"></div>
<div style="position:absolute;left:789px;top:734px;width:45px;height:2px;background:#cfcfcf"></div>
<div style="position:absolute;left:792px;top:737px;width:18px;height:1px;background:#909090"></div>
<div style="position:absolute;left:792px;top:740px;width:39px;height:1px;background:#a8a8b8"></div>
<div style="position:absolute;left:835px;top:734px;width:31px;height:9px;background:#f4f4f4"></div>
<div style="position:absolute;left:835px;top:734px;width:31px;height:2px;background:#cfcfcf"></div>
<div style="position:absolute;left:838px;top:737px;width:18px;height:1px;background:#909090"></div>
<div style="position:absolute;left:838px;top:740px;width:25px;height:1px;background:#a8a8b8"></div>
<div style="position:absolute;left:886px;top:658px;width:32px;height:33px;background:#c8102a"></div>
<svg style="position:absolute;left:886px;top:658px" width="32" height="33"><path d="M10 11L22.5 23.5M22.5 11L10 23.5" stroke="#fff" stroke-width="1.2"/></svg>
</body></html>
